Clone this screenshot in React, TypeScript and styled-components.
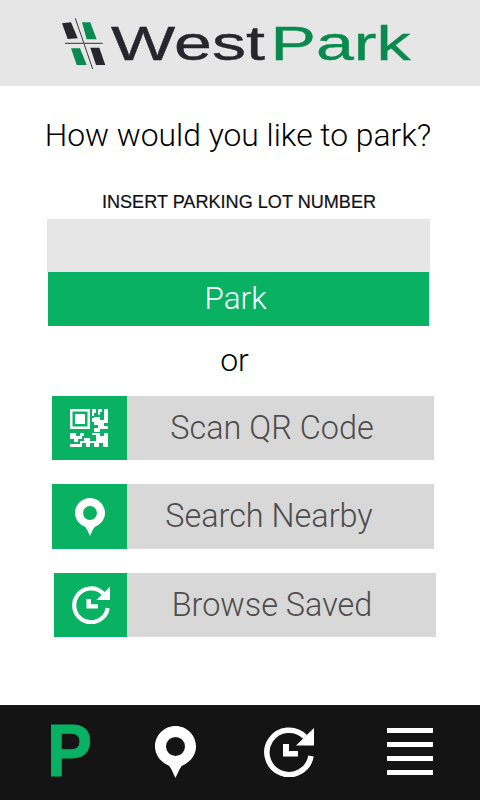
import React from "react";
import styled, { createGlobalStyle } from "styled-components";

const GREEN = "#08b262";
const LOGO_GREEN = "#0a8a4e";
const LIGHT_FONT = `Roboto, "Liberation Sans", Arial, sans-serif`;

const GlobalStyle = createGlobalStyle`
  html, body {
    margin: 0;
    padding: 0;
    background: #fff;
    font-family: "Liberation Sans", Arial, sans-serif;
  }
`;

const Page = styled.div`
  width: 480px;
  height: 800px;
  display: flex;
  flex-direction: column;
  overflow: hidden;
`;

const Header = styled.header`
  height: 86px;
  flex: none;
  background: #e6e6e6;
  display: flex;
  align-items: center;
  padding-left: 62px;
  box-sizing: border-box;
`;

const LogoWord = styled.div`
  margin-left: 5px;
  font-size: 49px;
  line-height: 50px;
  white-space: nowrap;
  color: #26262c;
  -webkit-text-stroke: 0.4px currentColor;
  transform: scaleX(1.39);
  transform-origin: left center;
`;

const LogoGreen = styled.span`
  color: ${LOGO_GREEN};
  margin-left: 4px;
`;

const Main = styled.main`
  flex: 1;
  display: flex;
  flex-direction: column;
`;

const Title = styled.h1`
  margin: 30px 0 0 -4px;
  font-family: ${LIGHT_FONT};
  font-size: 31.8px;
  line-height: 38px;
  font-weight: 300;
  color: #000;
  text-align: center;
`;

const Label = styled.div`
  margin: 38px 0 0 -2px;
  font-size: 18.1px;
  line-height: 20px;
  text-align: center;
  color: #111;
  -webkit-text-stroke: 0.2px currentColor;
`;

const LotInput = styled.input`
  display: block;
  box-sizing: border-box;
  width: 383px;
  height: 53px;
  margin: 7px 0 0 47px;
  border: 0;
  padding: 0;
  background: #e6e6e6;
`;

const ParkButton = styled.button`
  display: block;
  width: 381px;
  height: 54px;
  margin-left: 48px;
  border: 0;
  padding: 0 6px 2px 0;
  background: ${GREEN};
  color: #fff;
  font-family: ${LIGHT_FONT};
  font-weight: 300;
  font-size: 31.5px;
`;

const Or = styled.div`
  margin: 15px 0 0 -11px;
  font-family: ${LIGHT_FONT};
  font-weight: 300;
  font-size: 32px;
  line-height: 38px;
  text-align: center;
  color: #000;
`;

const Options = styled.div`
  margin-top: 17px;
  display: flex;
  flex-direction: column;
`;

const OptionRow = styled.div<{ $left: number; $top: number; $height: number }>`
  display: flex;
  height: ${p => p.$height}px;
  margin-top: ${p => p.$top}px;
  margin-left: ${p => p.$left}px;
`;

const OptionIcon = styled.div<{ $width: number }>`
  width: ${p => p.$width}px;
  flex: none;
  background: ${GREEN};
  display: flex;
  align-items: center;
  justify-content: center;
`;

const OptionText = styled.div<{ $width: number; $shift: number }>`
  width: ${p => p.$width}px;
  background: #d8d8d8;
  color: #4d4d4d;
  font-family: ${LIGHT_FONT};
  font-weight: 300;
  font-size: 32.4px;
  padding-bottom: 1px;
  display: flex;
  align-items: center;
  justify-content: center;
  padding-right: ${p => p.$shift}px;
  box-sizing: border-box;
`;

const TabBar = styled.nav`
  height: 95px;
  flex: none;
  background: #141414;
  display: grid;
  grid-template-columns: 105px 109px 123px 46px;
  align-items: center;
  box-sizing: border-box;
  padding: 0 0 0 50px;
`;

const ParkTab = styled.div`
  color: ${GREEN};
  font-size: 75px;
  line-height: 76px;
  font-weight: 700;
  margin: -5px 0 0 -3px;
  -webkit-text-stroke: 1px currentColor;
  transform: scaleX(0.9);
  transform-origin: left center;
`;

const MenuIcon = styled.div`
  height: 47px;
  margin-top: -2px;
  display: flex;
  flex-direction: column;
  justify-content: space-between;
`;

const MenuBar = styled.span`
  display: block;
  height: 5px;
  background: #fff;
`;

const TabGlyph = styled.div`
  display: flex;
  margin-top: -2px;
`;

const Pin = ({ width, height }: { width: number; height: number }) => (
  <svg width={width} height={height} viewBox="0 0 41 52" fill="none">
    <path
      fillRule="evenodd"
      fill="#fff"
      d="M20.5 0C31.8 0 41 9.2 41 20.5C41 29.5 35 36 27.5 39.5C25 41 23 47 20.5 52C18 47 16 41 13.5 39.5C6 36 0 29.5 0 20.5C0 9.2 9.2 0 20.5 0ZM20.5 11A9.5 9.5 0 1 0 20.5 30A9.5 9.5 0 1 0 20.5 11Z"
    />
  </svg>
);

const History = ({ size }: { size: number }) => (
  <svg width={size} height={size} viewBox="0 0 50 50" fill="none">
    <path d="M41 9.9A22.2 22.2 0 1 0 47 29" stroke="#fff" strokeWidth="5.5" />
    <path d="M50 1V18.5H32Z" fill="#fff" />
    <path d="M19 17H25V24H34V29.5H19Z" fill="#fff" />
  </svg>
);

// QR icon, 38 units across
const QrCode = () => (
  <svg width="38" height="38" viewBox="0 0 38 38" fill="#fff" style={{ marginRight: 2 }}>
    <path fillRule="evenodd" d="M0 0H20V20H0ZM2.5 2.5V17.5H17.5V2.5Z" />
    <rect x="5" y="5" width="10" height="10" />
    <path d="M22 0H26V4H24V7H22ZM28 0H32V3H30V6H28ZM34 0H38V8H34ZM24 8H30V11H34V8H38V14H34V17H38V20H30V23H24V19H28V16H24V13H22V9H24Z" />
    <path d="M0 24H6V27H10V24H14V27H12V30H8V33H4V30H0ZM14 29H20V32H26V26H22V24H30V27H34V24H38V38H33V34H29V38H24V34H20V38H16V34H12V38H0V35H10V32H14Z" />
  </svg>
);

const LogoMark = () => (
  <svg width="44" height="52" viewBox="0 0 44 52">
    <path d="M0 6.300L9 5.300L15.700 21.300L5.700 22Z" fill="#26262c" />
    <path d="M20 5.300H28.300L34.700 22.300H24.700Z" fill={LOGO_GREEN} />
    <path d="M9 31.300H18L24.700 48H14.700Z" fill={LOGO_GREEN} />
    <path d="M28.300 30.700H37.300L43.300 48H34Z" fill="#26262c" />
    <path d="M13.300 1.300L30.700 52" stroke="#26262c" strokeWidth="0.9" />
    <path d="M3 26.300H40.700" stroke="#555" strokeWidth="1.200" />
  </svg>
);

const App = () => (
  <Page>
    <GlobalStyle />
    <Header>
      <LogoMark />
      <LogoWord>
        West<LogoGreen>Park</LogoGreen>
      </LogoWord>
    </Header>
    <Main>
      <Title>How would you like to park?</Title>
      <Label>INSERT PARKING LOT NUMBER</Label>
      <LotInput aria-label="Parking lot number" />
      <ParkButton>Park</ParkButton>
      <Or>or</Or>
      <Options>
        <OptionRow $left={52} $top={0} $height={64}>
          <OptionIcon $width={75}><QrCode /></OptionIcon>
          <OptionText $width={307} $shift={17}>Scan QR Code</OptionText>
        </OptionRow>
        <OptionRow $left={52} $top={24} $height={65}>
          <OptionIcon $width={75}><Pin width={30} height={38} /></OptionIcon>
          <OptionText $width={307} $shift={23}>Search Nearby</OptionText>
        </OptionRow>
        <OptionRow $left={54} $top={24} $height={64}>
          <OptionIcon $width={73}><History size={38} /></OptionIcon>
          <OptionText $width={309} $shift={19}>Browse Saved</OptionText>
        </OptionRow>
      </Options>
    </Main>
    <TabBar>
      <ParkTab>P</ParkTab>
      <TabGlyph><Pin width={41} height={52} /></TabGlyph>
      <TabGlyph><History size={50} /></TabGlyph>
      <MenuIcon>
        <MenuBar />
        <MenuBar />
        <MenuBar />
        <MenuBar />
      </MenuIcon>
    </TabBar>
  </Page>
);

export default App;
